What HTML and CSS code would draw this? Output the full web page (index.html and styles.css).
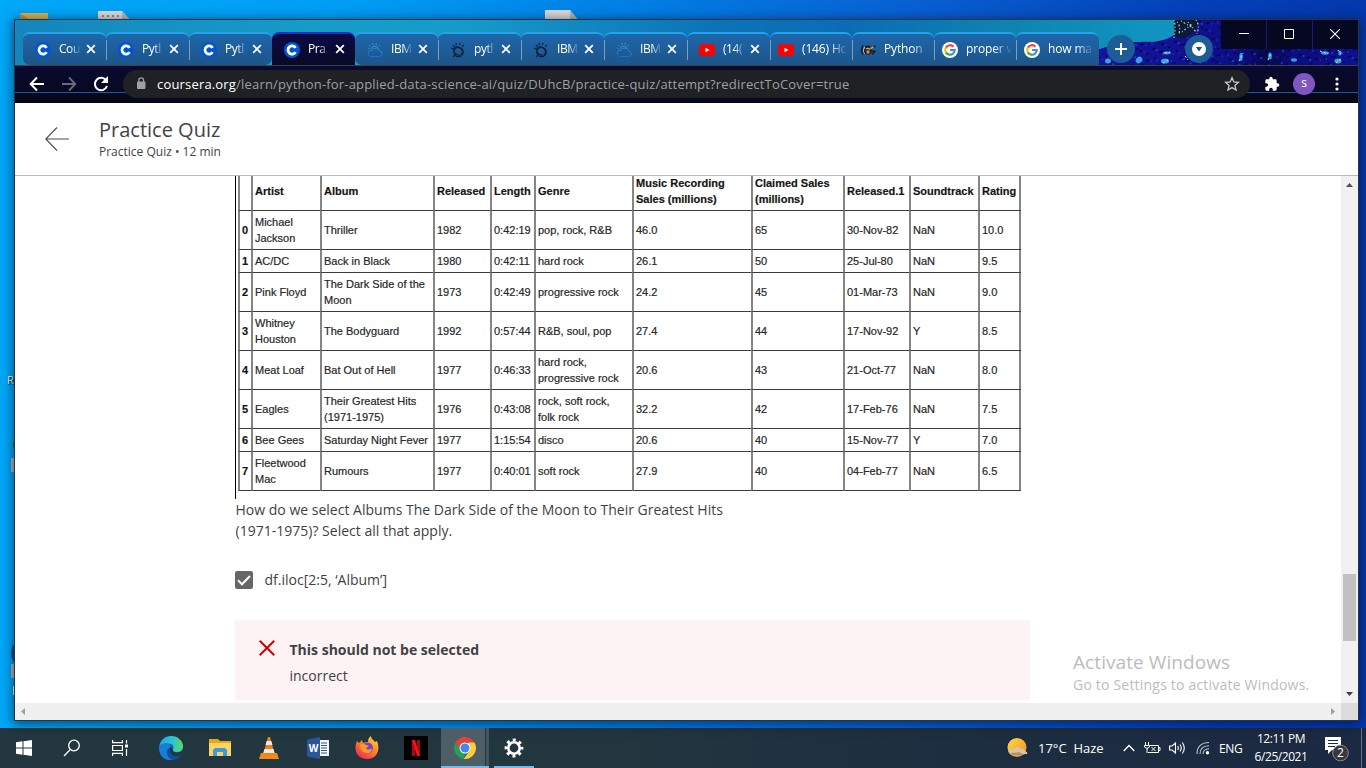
FILE: index.html
```
<!DOCTYPE html>
<html lang="en">
<head>
<meta charset="utf-8">
<title>Practice Quiz</title>
<link rel="stylesheet" href="styles.css">
</head>
<body>
<svg width="0" height="0" class="defs" aria-hidden="true">
  <defs>
    <linearGradient id="cloudGrad" x1="0" y1="0" x2="0" y2="1"><stop offset="0" stop-color="#35a5b8"/><stop offset="1" stop-color="#1670d8"/></linearGradient>
    <symbol id="coursera" viewBox="0 0 16 16"><circle cx="8" cy="8" r="8" fill="#0056d2"/><path d="M11.6 10.1A4.1 4.1 0 1 1 11.6 5.9" fill="none" stroke="#fff" stroke-width="2.7"/></symbol>
    <symbol id="cloud" viewBox="0 0 16 16"><g fill="none" stroke="url(#cloudGrad)" stroke-width="1"><path d="M3.5 14.5h9a2.6 2.6 0 0 0 .4-5.2A4.2 4.2 0 0 0 5 8.400A3.1 3.100 0 0 0 3.500 14.500zM4 7a4 4 0 0 1 7-1.300M1 6l1.500.7M2.500 3l1.300 1.300M5.700 1l.6 1.800M9.500 1l-.5 1.800M12.800 3l-1.200 1.300"/></g></symbol>
    <symbol id="watson" viewBox="0 0 16 16"><g fill="none" stroke="#0a2038" stroke-width="1.2"><circle cx="8.500" cy="10" r="4.700"/><ellipse cx="8" cy="9" rx="4.800" ry="3.600" transform="rotate(35 8 9)"/><path d="M1 6l2 .8M3 3l1.500 1.500M6 1l.5 2M10 1l-.4 2M13.700 3l-1.400 1.500M3 15l1.200-1.300"/></g></symbol>
    <symbol id="youtube" viewBox="0 0 16 16"><rect y="2.300" width="16" height="11.400" rx="2.800" fill="#f00"/><path d="M6.500 5.700v4.600l4-2.300z" fill="#fff"/></symbol>
    <symbol id="fly" viewBox="0 0 16 16"><path d="M3 3.500q-2.500 4.500 0 9" stroke="#171b22" stroke-width="1.600" fill="none"/><path d="M4.500 5q-2 3.500 0 7" stroke="#d5d8dc" fill="none"/><path d="M5 5.500l3-1.500 4 2 3.500-2M10 9l5 .5-3 3" stroke="#171b22" stroke-width="1.500" fill="none"/><ellipse cx="8" cy="9" rx="4" ry="3.800" fill="#20242c"/><path d="M6 7q2-1.500 4 .5M10.500 6.500l3-1.500" stroke="#d9a45c" stroke-width="1.400" fill="none"/><circle cx="8" cy="10" r="1.700" fill="#d98b45"/></symbol>
    <symbol id="google" viewBox="0 0 16 16"><circle cx="8" cy="8" r="8" fill="#fff"/><g fill="none" stroke-width="2.200"><path d="M3.900 5.600A4.700 4.700 0 0 1 11.400 4.700" stroke="#ea4335"/><path d="M3.900 5.600A4.700 4.700 0 0 0 3.900 10.400" stroke="#fbbc05"/><path d="M3.900 10.400A4.700 4.700 0 0 0 11 11.600" stroke="#34a853"/><path d="M11 11.600A4.700 4.700 0 0 0 12.700 8H8" stroke="#4285f4"/></g></symbol>
    <symbol id="x" viewBox="0 0 10 10"><path d="M1.200 1.200l7.600 7.600M8.800 1.200l-7.600 7.600" stroke="#fff" stroke-width="1.800"/></symbol>
  </defs>
</svg>
<div class="screen">
  <main class="desktop">
    <svg class="shortcuts" width="620" height="20" viewBox="0 0 620 20">
      <path d="M20 13h28v7H20z" fill="#d5b655"/><path d="M20 13l10 7H20z" fill="#b99539"/>
      <path d="M98 11h24l8 9H98z" fill="#dcdcdc"/><path d="M122 11v8h7z" fill="#b9b9b9"/><path d="M102 16h20" stroke="#8793a8" stroke-width="2" stroke-dasharray="2 3"/>
      <path d="M545 10h25l8 10h-33z" fill="#d9d9d9"/><path d="M570 10v9h7z" fill="#b5b5b5"/>
    </svg>
    <svg class="side-shortcuts" width="15" height="330" viewBox="0 0 15 330">
      <circle cx="21" cy="65" r="8" fill="#356b46"/><path d="M11 78h4v14h-4zM11 284h4v14h-4z" fill="#b3b7bd"/><circle cx="26" cy="273" r="15" fill="#0b4f9b"/><path d="M13.500 306v9" stroke="#fff" stroke-width="1"/>
    </svg>
    <span class="side-label">R</span>

    <section class="window">
      <div class="tabstrip">
        <svg class="theme-art" width="290" height="45" viewBox="0 0 290 45">
          <defs>
            <linearGradient id="art" x1="0" x2="1"><stop offset="0" stop-color="#1515a0"/><stop offset=".55" stop-color="#0c0f88"/><stop offset=".65" stop-color="#06084c"/><stop offset=".75" stop-color="#0c0d80"/><stop offset="1" stop-color="#0f1093"/></linearGradient>
            <pattern id="grain" width="23" height="17" patternUnits="userSpaceOnUse" patternTransform="rotate(-18)"><path d="M2 3h4M12 1h3M18 6h2M7 8h5M1 12h2M15 12h4M9 15h3" stroke="#05063f" stroke-width="1.600"/><path d="M5 5h2M16 3h1M10 11h2M20 14h1M3 15h1" stroke="#3a5fe0"/></pattern>
          </defs>
          <path d="M28 45V30Q60 20 85 22 100 20 106 15V0H290V45z" fill="url(#art)"/>
          <path d="M28 45V30Q60 20 85 22 100 20 106 15V0H290V45z" fill="url(#grain)"/>
          <path d="M106 0h24l-2 12-14 6-8-2z" fill="#0b1a35"/>
          <g fill="none" stroke="#b5cfc0" stroke-width="1.200" stroke-dasharray="1 2 2 2"><path d="M106 0q2 6 0 18M109 2q4 4 2 12M113 1l12 7M128 0q4 5 1 14M120 2l8 10M114 12l10-8"/></g>
          <g fill="#389fe0"><ellipse cx="40" cy="41" rx="3" ry="2.500"/><ellipse cx="71" cy="40" rx="3" ry="3.500" transform="rotate(45 71 40)"/><ellipse cx="97" cy="41" rx="4" ry="2.600"/><ellipse cx="99" cy="33" rx="4" ry="1.400"/><ellipse cx="173" cy="37" rx="1.700" ry="4"/><ellipse cx="202" cy="36" rx="1.800" ry="3.400"/><ellipse cx="226" cy="40" rx="3" ry="1.700"/><ellipse cx="257" cy="33" rx="4" ry="1.700"/><ellipse cx="270" cy="41" rx="3.500" ry="2.400"/><ellipse cx="272" cy="33" rx="1.700" ry="2.600"/></g>
          <g fill="none" stroke="#d3e9e1" stroke-dasharray="2 2"><path d="M95 43l7-4M97 33l5-1M171 41l4-8M200 40l3-7M252 31l8 3M268 43l6-5M270 30l3 4M117 36l3 4M128 38l2 2"/></g>
        </svg>
        <div class="tabs">
          <div class="tab"><svg class="fav"><use href="#coursera"/></svg><span class="ttl">Cou</span><svg class="cls"><use href="#x"/></svg></div>
          <div class="tab sep"><svg class="fav"><use href="#coursera"/></svg><span class="ttl">Pytl</span><svg class="cls"><use href="#x"/></svg></div>
          <div class="tab sep before"><svg class="fav"><use href="#coursera"/></svg><span class="ttl">Pytl</span><svg class="cls"><use href="#x"/></svg></div>
          <div class="tab active"><svg class="fav"><use href="#coursera"/></svg><span class="ttl">Pra</span><svg class="cls"><use href="#x"/></svg></div>
          <div class="tab after"><svg class="fav"><use href="#cloud"/></svg><span class="ttl">IBM</span><svg class="cls"><use href="#x"/></svg></div>
          <div class="tab sep"><svg class="fav"><use href="#watson"/></svg><span class="ttl">pytl</span><svg class="cls"><use href="#x"/></svg></div>
          <div class="tab sep"><svg class="fav"><use href="#watson"/></svg><span class="ttl">IBM</span><svg class="cls"><use href="#x"/></svg></div>
          <div class="tab sep"><svg class="fav"><use href="#cloud"/></svg><span class="ttl">IBM</span><svg class="cls"><use href="#x"/></svg></div>
          <div class="tab sep"><svg class="fav"><use href="#youtube"/></svg><span class="ttl">(14(</span><svg class="cls"><use href="#x"/></svg></div>
          <div class="tab sep wide"><svg class="fav"><use href="#youtube"/></svg><span class="ttl">(146) Hc</span></div>
          <div class="tab sep wide"><svg class="fav"><use href="#fly"/></svg><span class="ttl">Python</span></div>
          <div class="tab sep wide"><svg class="fav"><use href="#google"/></svg><span class="ttl">proper v</span></div>
          <div class="tab sep wide last"><svg class="fav"><use href="#google"/></svg><span class="ttl">how ma</span></div>
        </div>
        <div class="round plus"><svg width="12" height="12"><path d="M6 0v12M0 6h12" stroke="#fff" stroke-width="2"/></svg></div>
        <div class="round drop"><svg width="14" height="14"><circle cx="7" cy="7" r="7" fill="#fff"/><path d="M3.800 5h6.400L7 9.500z" fill="#1c568f"/></svg></div>
        <div class="controls">
          <span><svg width="10" height="10"><path d="M0 4.500h10" stroke="#fff"/></svg></span>
          <span><svg width="10" height="10"><path d="M.5.5h9v9h-9z" stroke="#fff" fill="none"/></svg></span>
          <span><svg width="10" height="10"><path d="M0 0l10 10M10 0L0 10" stroke="#fff" stroke-width="1.100"/></svg></span>
        </div>
      </div>

      <div class="toolbar">
        <svg class="nav" viewBox="0 0 16 16"><path d="M15 8H2M8 1.500L1.700 8 8 14.500" stroke="#fff" stroke-width="2" fill="none"/></svg>
        <svg class="nav" viewBox="0 0 16 16"><path d="M1 8h13M8 1.500L14.300 8 8 14.500" stroke="#696a78" stroke-width="1.800" fill="none"/></svg>
        <svg class="nav" viewBox="0 0 16 16"><path d="M13.300 4.600A6.200 6.200 0 1 0 14 10" stroke="#fff" stroke-width="2" fill="none"/><path d="M15 0v7H8z" fill="#fff"/></svg>
        <div class="omnibox">
          <svg width="10" height="13" viewBox="0 0 10 13"><rect x="1" y="4.500" width="8.500" height="7.500" rx="1" fill="#9aa0a6"/><path d="M2.800 5V3.200a2.400 2.400 0 0 1 4.800 0V5" stroke="#9aa0a6" stroke-width="1.300" fill="none"/></svg>
          <span class="url"><b>coursera.org</b>/learn/python-for-applied-data-science-ai/quiz/DUhcB/practice-quiz/attempt?redirectToCover=true</span>
          <svg class="star" width="16" height="16" viewBox="0 0 16 16"><path d="M8 1.600l1.800 4.300 4.700.4-3.600 3.100 1.100 4.600L8 11.600 4 14l1.100-4.600L1.500 6.300l4.700-.4z" fill="none" stroke="#c8c8c8" stroke-width="1.300"/></svg>
        </div>
        <svg class="puzzle" width="16" height="16" viewBox="0 0 24 24"><path d="M20.500 11H19V7a2 2 0 0 0-2-2h-4V3.500a2.500 2.500 0 0 0-5 0V5H4a2 2 0 0 0-2 2v3.800h1.500a2.700 2.700 0 0 1 0 5.400H2V20a2 2 0 0 0 2 2h3.800v-1.500a2.700 2.700 0 0 1 5.400 0V22H17a2 2 0 0 0 2-2v-4h1.500a2.500 2.500 0 0 0 0-5z" fill="#fff"/></svg>
        <span class="avatar">s</span>
        <svg class="kebab" width="4" height="14"><g fill="#fff"><circle cx="2" cy="2" r="1.600"/><circle cx="2" cy="7" r="1.600"/><circle cx="2" cy="12" r="1.600"/></g></svg>
      </div>

      <header class="quiz-head">
        <svg width="24" height="24" viewBox="0 0 24 24"><path d="M.7 12H24M12 .5L.7 12 12 23.500" stroke="#4a4a4a" stroke-width="1.100" fill="none"/></svg>
        <div><h1>Practice Quiz</h1><p>Practice Quiz • 12 min</p></div>
      </header>

      <div class="viewport">
        <div class="page">
          <div class="table-frame">
            <div class="grid">
              <b></b><b>Artist</b><b>Album</b><b>Released</b><b>Length</b><b>Genre</b><b>Music Recording<br>Sales (millions)</b><b>Claimed Sales<br>(millions)</b><b>Released.1</b><b>Soundtrack</b><b>Rating</b>
              <b>0</b><i>Michael<br>Jackson</i><i>Thriller</i><i>1982</i><i>0:42:19</i><i>pop, rock, R&amp;B</i><i>46.0</i><i>65</i><i>30-Nov-82</i><i>NaN</i><i>10.0</i>
              <b>1</b><i>AC/DC</i><i>Back in Black</i><i>1980</i><i>0:42:11</i><i>hard rock</i><i>26.1</i><i>50</i><i>25-Jul-80</i><i>NaN</i><i>9.5</i>
              <b>2</b><i>Pink Floyd</i><i>The Dark Side of the<br>Moon</i><i>1973</i><i>0:42:49</i><i>progressive rock</i><i>24.2</i><i>45</i><i>01-Mar-73</i><i>NaN</i><i>9.0</i>
              <b>3</b><i>Whitney<br>Houston</i><i>The Bodyguard</i><i>1992</i><i>0:57:44</i><i>R&amp;B, soul, pop</i><i>27.4</i><i>44</i><i>17-Nov-92</i><i>Y</i><i>8.5</i>
              <b>4</b><i>Meat Loaf</i><i>Bat Out of Hell</i><i>1977</i><i>0:46:33</i><i>hard rock,<br>progressive rock</i><i>20.6</i><i>43</i><i>21-Oct-77</i><i>NaN</i><i>8.0</i>
              <b>5</b><i>Eagles</i><i>Their Greatest Hits<br>(1971-1975)</i><i>1976</i><i>0:43:08</i><i>rock, soft rock,<br>folk rock</i><i>32.2</i><i>42</i><i>17-Feb-76</i><i>NaN</i><i>7.5</i>
              <b>6</b><i>Bee Gees</i><i>Saturday Night Fever</i><i>1977</i><i>1:15:54</i><i>disco</i><i>20.6</i><i>40</i><i>15-Nov-77</i><i>Y</i><i>7.0</i>
              <b>7</b><i>Fleetwood<br>Mac</i><i>Rumours</i><i>1977</i><i>0:40:01</i><i>soft rock</i><i>27.9</i><i>40</i><i>04-Feb-77</i><i>NaN</i><i>6.5</i>
            </div>
          </div>
          <p class="question">How do we select Albums The Dark Side of the Moon to Their Greatest Hits<br>(1971-1975)? Select all that apply.</p>
          <div class="option">
            <svg width="18" height="18"><rect width="18" height="18" rx="2" fill="#666"/><path d="M3 9.300l4 4L15 5" stroke="#fff" stroke-width="2" fill="none"/></svg>
            <span>df.iloc[2:5, ‘Album’]</span>
          </div>
          <div class="feedback">
            <svg width="16" height="16"><path d="M.7.7l14.600 14.600M15.300.7L.7 15.300" stroke="#d30001" stroke-width="2"/></svg>
            <div><strong>This should not be selected</strong><p>incorrect</p></div>
          </div>
        </div>
        <div class="vscroll"><svg width="7" height="4"><path d="M0 4h7L3.500 0z" fill="#505050"/></svg><div class="thumb"></div><svg width="7" height="4"><path d="M0 0h7L3.500 4z" fill="#404040"/></svg></div>
      </div>
      <div class="hscroll"><svg width="4" height="7"><path d="M4 0v7L0 3.500z" fill="#a0a0a0"/></svg><svg width="4" height="7"><path d="M0 0v7l4-3.500z" fill="#a0a0a0"/></svg><div class="corner"></div></div>
    </section>
    <div class="watermark"><div class="w1">Activate Windows</div><div class="w2">Go to Settings to activate Windows.</div></div>
  </main>

  <footer class="taskbar">
    <div class="sys"><svg width="16" height="16"><path d="M0 2.200L6.500 1.300v6.200H0zM7.500 1.200L16 0v7.500H7.500zM0 8.500h6.500v6.200L0 13.800zM7.500 8.500H16V16l-8.500-1.200z" fill="#fff"/></svg></div>
    <div class="sys"><svg width="18" height="18"><circle cx="11" cy="6.500" r="5.300" fill="none" stroke="#fff" stroke-width="1.300"/><path d="M7.300 10.500L1 17" stroke="#fff" stroke-width="1.300"/></svg></div>
    <div class="sys"><svg width="17" height="16"><g fill="none" stroke="#fff" stroke-width="1.200"><path d="M.6 0v2.600h9.800V0M.6 5.500h9.800v5H.6zM.6 16v-2.600h9.800V16M14.500 0v3.500M14.500 9v7"/></g><path d="M13 4.500h3v3h-3z" fill="#fff"/></svg></div>
    <div class="apps">
      <div class="app"><svg width="24" height="24" viewBox="0 0 24 24"><defs><linearGradient id="eg" x1="0" x2="1"><stop offset="0" stop-color="#1fa7e5"/><stop offset=".55" stop-color="#2bc3d2"/><stop offset="1" stop-color="#5fdc59"/></linearGradient></defs><circle cx="12" cy="12" r="12" fill="#0f65b8"/><path d="M.3 10.500C1.500 4 6.300 0 12 0c7 0 12 5 12 10.200 0 3.600-2.700 6-6 6-3.200 0-4.600-1.300-4-2.400 1.800-3.400-.8-6.300-4.300-6.300-4.500 0-8.200 1-9.400 3z" fill="url(#eg)"/><path d="M.3 10.500C1.600 7.600 5.500 6.700 8.500 7.400 11 8 12 10 11.500 11.200 8 12 7 14.500 8.500 18c1.300 3 4 5 6.500 5.600C6 26-.8 19.500.3 10.500z" fill="#147fd4"/><path d="M14 13.800c-.8 1.300.7 2.600 4 2.600 2.500 0 4-.6 6-2.400v3c-.8 0-1.300.9-2.500 2.400-3 2-10 1.800-11-5.200 0-2 .5-3 1.300-3.300z" fill="#22373f"/><path d="M11 12c-2 3 1 8.500 6 8.500 2 0 3.500-.6 5-1.500-2 3.600-5.500 5-9 4.800C8 22 6 14 11 12z" fill="#0c4fa0"/></svg></div>
      <div class="app"><svg width="22" height="20"><path d="M0 1h9l2 2h11v15H0z" fill="#e8a714"/><path d="M0 5h22v13H0z" fill="#fcd462"/><path d="M4 18v-6l2-2h10l2 2v6h-4v-4H8v4z" fill="#3d9adf"/></svg></div>
      <div class="app"><svg width="20" height="24" viewBox="0 0 20 24"><path d="M9 1h2l5 18H4z" fill="#f08016"/><path d="M7.700 5h4.600l1.200 4H6.500zM5.500 13h9l1.200 4H4.300z" fill="#ececec"/><path d="M2 17h2.500q5 4 11 0H18l2 6H0z" fill="#f38a16"/></svg></div>
      <div class="app"><svg width="22" height="22"><path d="M12 3h10v16H12z" fill="#f5f7fa"/><path d="M14 6h6M14 8.500h6M14 11h6M14 13.500h6M14 16h6" stroke="#2b579a"/><path d="M0 2.500L13 0v22L0 19.500z" fill="#2b579a"/><text x="1.800" y="15" class="wordmark">W</text></svg></div>
      <div class="app"><svg width="24" height="24" viewBox="0 0 24 24"><defs><linearGradient id="ff" x1=".9" y1="0" x2=".2" y2="1"><stop offset="0" stop-color="#ffe03a"/><stop offset=".45" stop-color="#ff8a1d"/><stop offset="1" stop-color="#f3235a"/></linearGradient></defs><path d="M2 5l2 2 3-3 1 3c2-1 4-1 5-1 0-3 1-5 3-6 0 3 3 4 4 6l2-1c4 10-1 18-10 18C2 23-2 14 2 5z" fill="url(#ff)"/><circle cx="12.500" cy="12" r="5.500" fill="#7443d3"/><path d="M5 9q4-2 6 0l3 1-3 2c1 2 4 2 6 0 0 4-3 6-6 5-4-1-6-4-6-8z" fill="#ff9b24"/></svg></div>
      <div class="app"><svg width="24" height="24"><path d="M0 0h24v24H0z"/><path d="M8 4h3v16H8zM13 4h3v16h-3z" fill="#a50912"/><path d="M8 4h3l5 16h-3z" fill="#ef1420"/></svg></div>
      <div class="app current"><svg width="24" height="24" viewBox="0 0 24 24"><path d="M2.500 6.500A11 11 0 0 1 21.500 6.500H12L7.200 14.700z" fill="#e34435"/><path d="M2.500 6.500L7.200 14.700 12 17.500l-1.400 5.400A11 11 0 0 1 2.500 6.500z" fill="#23a157"/><path d="M21.500 6.500A11 11 0 0 1 10.600 22.900l6.200-8.100L15 6.500z" fill="#fccd35"/><circle cx="12" cy="12" r="5.500" fill="#fff"/><circle cx="12" cy="12" r="4.500" fill="#4688f1"/></svg></div>
      <div class="app running"><svg width="20" height="20" viewBox="0 0 20 20"><circle cx="10" cy="10" r="5.700" fill="none" stroke="#fff" stroke-width="2.600"/><circle cx="10" cy="10" r="8" fill="none" stroke="#fff" stroke-width="2.800" stroke-dasharray="3 3.283" stroke-dashoffset="1.500"/></svg></div>
    </div>
    <div class="tray">
      <svg width="24" height="24"><defs><linearGradient id="sun" x1="0" x2="1" y1="0" y2="1"><stop offset="0" stop-color="#ffda54"/><stop offset="1" stop-color="#f58a0f"/></linearGradient></defs><circle cx="12" cy="11.500" r="9.500" fill="url(#sun)"/><path d="M4 14q4-1 6-2 3-3 6 1 3-1 4 2 3 1 2 3H6q-4-1-2-4z" fill="#dac3a5"/><path d="M6 17q5 0 8-1l6 3H7z" fill="#a9937d"/></svg>
      <span class="weather">17°C&nbsp; Haze</span>
      <svg width="12" height="8"><path d="M.7 7L6 1.500 11.300 7" fill="none" stroke="#fff" stroke-width="1.300"/></svg>
      <svg width="17" height="13"><g fill="none" stroke="#fff"><path d="M5.500 3.500h9v7H4M15 5.500h1v3h-1M7.500 5l4 4M11.500 5l-4 4M1.500 0v3M4.500 0v3M.5 3.500h5v1.500q-2.500 3-5 0zM3 6v5"/></g></svg>
      <svg width="17" height="14"><g fill="none" stroke="#fff" stroke-width="1.100"><path d="M.6 5h2.500L6.500 2v10L3.100 9H.6zM8.700 5q1.200 2 0 4M11 3.500q2.500 3.500 0 7M13.300 1.500q4 5.500 0 11"/></g></svg>
      <svg width="14" height="14"><g fill="none" stroke="#b9c0ca" stroke-width="1.100"><path d="M1 13Q1 2 13 1.500M4 13Q4 5 13 4.700M7 13Q7 8 13 7.700"/></g><circle cx="11.500" cy="11.700" r="1.700" fill="#fff"/></svg>
      <span class="eng">ENG</span>
      <div class="clock"><span>12:11 PM</span><span>6/25/2021</span></div>
      <div class="notes"><svg width="26" height="28"><path d="M1 2h16v13H8l-4 4v-4H1z" fill="#fff"/><path d="M4 5.500h10M4 8.500h10M4 11.500h7" stroke="#1b2a40"/><circle cx="16.500" cy="18" r="7.800" fill="#38383c" stroke="#8a8a90"/></svg><span class="badge">2</span></div>
      <div class="peek"></div>
    </div>
  </footer>
</div>
</body>
</html>
```
FILE: styles.css
```
* { box-sizing: border-box; }
body { margin: 0; font-family: "Open Sans", "Noto Sans", sans-serif; color: #3f4244; overflow: hidden; }
svg { display: block; flex: none; }
h1, p { margin: 0; font-weight: 400; }
.defs { position: absolute; }
.screen { width: 1366px; height: 768px; display: flex; flex-direction: column; }

/* Desktop */
.desktop { position: relative; height: 728px; background: linear-gradient(90deg, #00a8f8 0, #009df5 25%, #0085e8 42%, #0863d4 65%, #043fb8 88%, #0438ad 100%); }
.shortcuts { position: absolute; left: 0; top: 0; }
.side-shortcuts { position: absolute; left: 0; top: 380px; }
.side-label { position: absolute; left: 7px; top: 372px; font-size: 11px; color: #fff; text-shadow: 1px 1px 1px #000; }

/* Browser window */
.window { position: absolute; left: 14px; top: 19px; width: 1345px; height: 702px; border: 1px solid #2c333b; background: #fff; display: flex; flex-direction: column; box-shadow: 0 2px 11px 1px rgba(0, 15, 40, .6); }
.tabstrip { position: relative; height: 45px; padding: 12px 0 0 8px; display: flex; background: linear-gradient(90deg, #1486bd 0, #189bc9 22%, #169bc9 33%, #0d73b8 52%, #0a6cb5 62%, #0e84b0 74%, #1093bf 84%, #1093bf 100%); }
.theme-art { position: absolute; right: 0; top: 0; }
.tabs { position: relative; display: flex; }
.tab { width: 83px; height: 33px; padding-left: 12px; display: flex; align-items: center; background: linear-gradient(#1f66ac, #1c5589); border-top: 2px solid #20a5ec; border-radius: 7px 7px 0 0; position: relative; }
.tab.wide { width: 82px; padding-left: 8px; }
.tab.sep::before { content: ""; position: absolute; left: 0; top: 6px; width: 1px; height: 20px; background: #7d9dbc; }
.tab.before { border-bottom-right-radius: 7px; }
.tab.after { border-bottom-left-radius: 7px; }
.tab.active { background: linear-gradient(#0c0a46, #090a27); border-top-color: #1238c8; }
.tab:first-child { border-bottom-left-radius: 7px; }
.tab.last { width: 83px; }
.fav { width: 16px; height: 16px; margin-right: 8px; }
.ttl { width: 22px; position: relative; top: -1px; white-space: nowrap; font-size: 12px; letter-spacing: -.45px; color: #fff; -webkit-mask-image: linear-gradient(90deg, #000 50%, transparent); mask-image: linear-gradient(90deg, #000 50%, transparent); }
.wide .ttl { width: 46px; letter-spacing: -.15px; -webkit-mask-image: linear-gradient(90deg, #000 60%, transparent); mask-image: linear-gradient(90deg, #000 60%, transparent); }
.cls { width: 10px; height: 10px; margin-left: 5px; margin-top: -1px; }
.round { position: relative; width: 28px; height: 28px; border-radius: 50%; background: #1d5c96; display: flex; align-items: center; justify-content: center; margin-top: 3px; }
.plus { margin-left: 8px; }
.drop { margin-left: 50px; }
.controls { position: relative; display: flex; height: 29px; margin-top: -12px; margin-left: auto; width: 137px; background: #060721; }
.controls span { width: 45px; padding-bottom: 1px; display: flex; align-items: center; justify-content: center; }
.controls span + span { width: 46px; padding-right: 1px; border-left: 1px solid #17187f; }

.toolbar { height: 38px; border-top: 1px solid #3b4248; display: flex; align-items: center; padding: 0 0 2px 14px; background: linear-gradient(#0a0930 0, #080922 26px, #145aa0 26px, #145aa0 27px, #05061a 27px, #080818 36px, #000 37px); }
.nav { width: 16px; height: 16px; margin-right: 16px; }
.omnibox { width: 1127px; height: 28px; margin-left: -2px; padding: 0 10px 0 13px; border-radius: 14px; background: #202124; display: flex; align-items: center; }
.url { margin-left: 11px; font-size: 13px; letter-spacing: .177px; color: #9aa0a6; white-space: nowrap; }
.url b { font-weight: 400; color: #fff; }
.star { margin-left: auto; }
.puzzle { margin-left: 14px; }
.avatar { width: 22px; height: 22px; margin-left: 13px; border-radius: 50%; background: #7e57c2; color: #fff; font-size: 12px; line-height: 20px; text-align: center; }
.kebab { margin-left: 20px; }

/* Quiz page */
.quiz-head { height: 73px; border-bottom: 1px solid #b8b8b8; display: flex; align-items: flex-start; padding-left: 30px; }
.quiz-head svg { margin-top: 24px; }
.quiz-head div { margin-left: 30px; padding-top: 13px; }
.quiz-head h1 { font-size: 20px; line-height: 28px; }
.quiz-head p { font-size: 12px; line-height: 16px; }
.viewport { height: 527px; display: flex; overflow: hidden; }
.page { width: 1326px; padding-left: 220px; font-size: 14px; }
.table-frame { height: 323px; border-left: 1px solid #000; padding-left: 2px; overflow: hidden; }
.grid { display: grid; width: 783px; margin-top: -5px; grid-template-columns: 13px 69px 113px 57px 44px 98px 119px 92px 66px 69px 43px; grid-template-rows: 40px 39px 23px 39px 39px 39px 39px 23px 39px; border-right: 2px solid #858585; font: 11px/15.600px "Liberation Sans", Arial, sans-serif; color: #222; -webkit-text-stroke: .2px #333; }
.grid > * { font-style: normal; white-space: nowrap; display: block; align-content: center; border-left: 2px solid #858585; border-bottom: 1px solid #3c3c3c; padding: 2px 0 0 2px; }
.grid b { color: #111; }
.question { line-height: 21px; letter-spacing: .008px; padding-left: .5px; }
.option { display: flex; align-items: center; gap: 11.500px; margin-top: 29px; height: 19px; }
.feedback { display: flex; width: 795px; height: 80px; margin-top: 31px; padding: 20px 0 0 24px; background: #fdf3f4; }
.feedback div { margin-left: 14.500px; }
.feedback strong { display: block; line-height: 20px; font-weight: 700; }
.feedback p { line-height: 20px; margin-top: 6px; }
.vscroll { width: 17px; background: #f1f1f1; position: relative; display: flex; flex-direction: column; align-items: center; padding: 7px 0; }
.thumb { width: 13px; height: 67px; margin-top: 387px; background: #c1c1c1; }
.vscroll svg:last-child { margin-top: auto; }
.hscroll { height: 17px; background: #f0f0f0; display: flex; align-items: center; padding-left: 6px; }
.hscroll svg + svg { margin-left: auto; }
.corner { width: 17px; height: 17px; margin-left: 6px; background: #dcdcdc; }
.watermark { position: absolute; left: 1073px; top: 649px; color: #bcbcbc; white-space: nowrap; }
.w1 { font-size: 19px; line-height: 26px; letter-spacing: .08px; }
.w2 { font-size: 14px; line-height: 20px; letter-spacing: .2px; }

/* Taskbar */
.taskbar { height: 40px; display: flex; background: linear-gradient(90deg, #22373f 0, #22363f 45%, #1e2f40 65%, #1b2942 100%); color: #fff; }
.sys { width: 48px; display: flex; align-items: center; justify-content: center; }
.apps { display: flex; margin-left: 2px; }
.app { width: 49px; display: flex; align-items: center; justify-content: center; position: relative; }
.app.current::before { content: ""; position: absolute; left: 1px; right: 0; top: 0; bottom: 0; background: linear-gradient(90deg, #4d5e66 44px, #24343b 44px, #24343b 45px, #43545c 45px); border-bottom: 2px solid #76b9ed; }
.app.current svg { position: relative; }
.app.running::after { content: ""; position: absolute; left: 5px; width: 40px; bottom: 0; height: 2px; background: #76b9ed; }
.wordmark { font: 700 10px "Open Sans", sans-serif; fill: #fff; }
.tray { margin-left: 467px; display: flex; align-items: center; font-size: 12px; white-space: nowrap; }
.weather { width: 76px; margin-left: 9px; font-size: 13px; }
.tray svg:nth-child(3) { margin-left: 9px; }
.tray svg:nth-child(4) { margin-left: 9px; }
.tray svg:nth-child(5) { margin-left: 8px; }
.tray svg:nth-child(6) { margin-left: 10px; }
.eng { margin-left: 9px; width: 26px; letter-spacing: -.3px; }
.clock { width: 60px; margin-left: 6px; display: flex; flex-direction: column; text-align: center; line-height: 18px; letter-spacing: -.45px; }
.notes { position: relative; margin-left: 13px; width: 26px; height: 26px; }
.badge { position: absolute; left: 13px; top: 10px; font-size: 12px; line-height: 16px; }
.peek { width: 1px; height: 40px; background: #66707f; margin-left: 11px; }
```
